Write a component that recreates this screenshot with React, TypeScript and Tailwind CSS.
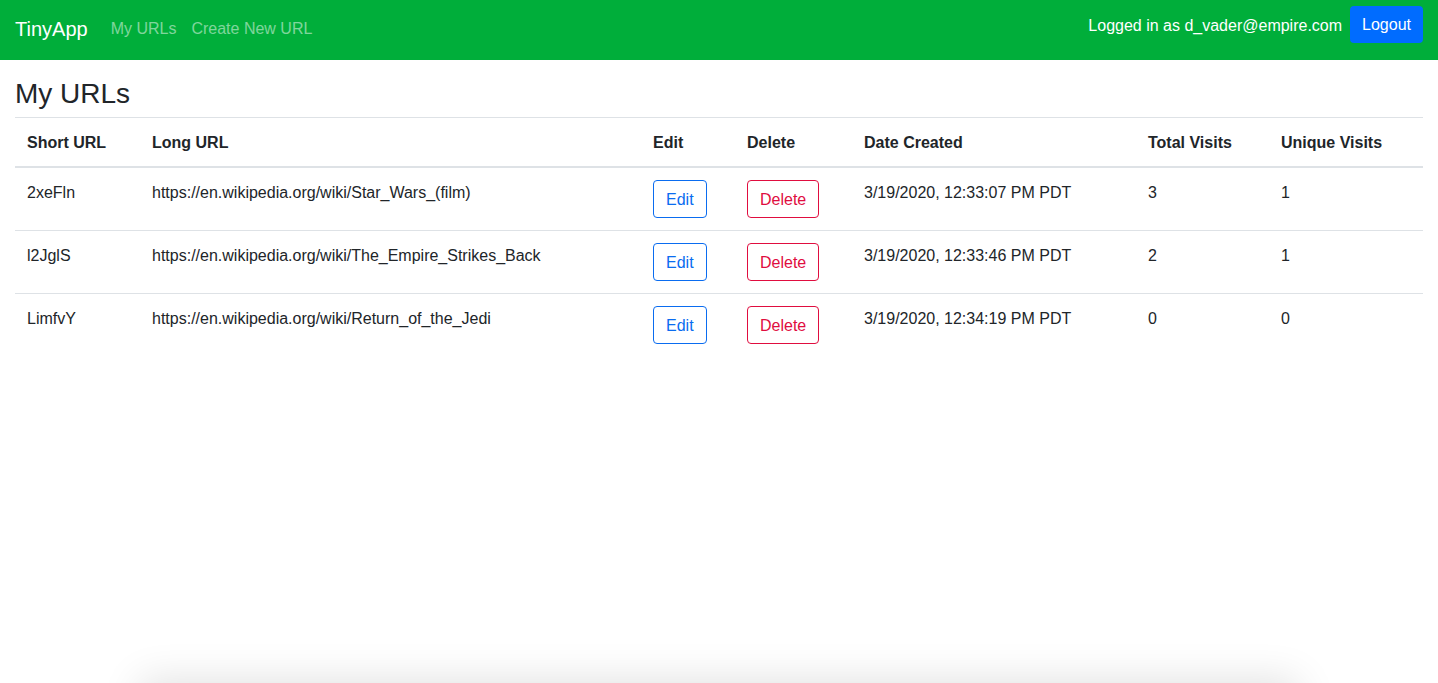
type UrlRow = {
  short: string;
  long: string;
  created: string;
  total: number;
  unique: number;
};

const rows: UrlRow[] = [
  { short: '2xeFln', long: 'https://en.wikipedia.org/wiki/Star_Wars_(film)', created: '3/19/2020, 12:33:07 PM PDT', total: 3, unique: 1 },
  { short: 'l2JglS', long: 'https://en.wikipedia.org/wiki/The_Empire_Strikes_Back', created: '3/19/2020, 12:33:46 PM PDT', total: 2, unique: 1 },
  { short: 'LimfvY', long: 'https://en.wikipedia.org/wiki/Return_of_the_Jedi', created: '3/19/2020, 12:34:19 PM PDT', total: 0, unique: 0 },
];

function Navbar() {
  return (
    <nav className="flex h-[60px] items-start justify-between bg-[#00ae3a] px-[15px]">
      <div className="flex items-center pt-[14px]">
        <a href="#" className="mr-[23px] text-[20px] leading-[30px] text-white">TinyApp</a>
        <a href="#" className="mr-[15px] text-base leading-[30px] text-white/50">My URLs</a>
        <a href="#" className="text-base leading-[30px] text-white/50">Create New URL</a>
      </div>
      <div className="flex items-center pt-[6px]">
        <span className="mt-[2px] mr-2 text-base text-white">Logged in as d_vader@empire.com</span>
        <button className="h-[37px] rounded-[4px] bg-[#006cff] px-3 pt-px text-base text-white">Logout</button>
      </div>
    </nav>
  );
}

function UrlTable() {
  const cell = 'px-3 pt-[13px] pb-[11px] align-top leading-6';
  return (
    <table className="w-full border-collapse text-left text-base text-[#212529]">
      <thead>
        <tr className="border-t border-b-2 border-t-[#dee2e6] border-b-[#dee2e6]">
          <th className={`w-[125px] font-bold ${cell}`}>Short URL</th>
          <th className={`w-[501px] font-bold ${cell}`}>Long URL</th>
          <th className={`w-[94px] font-bold ${cell}`}>Edit</th>
          <th className={`w-[117px] font-bold ${cell}`}>Delete</th>
          <th className={`w-[284px] font-bold ${cell}`}>Date Created</th>
          <th className={`w-[133px] font-bold ${cell}`}>Total Visits</th>
          <th className={`font-bold ${cell}`}>Unique Visits</th>
        </tr>
      </thead>
      <tbody>
        {rows.map((r, i) => (
          <tr key={r.short} className={i > 0 ? 'border-t border-[#dee2e6]' : ''}>
            <td className={cell}>{r.short}</td>
            <td className={cell}>{r.long}</td>
            <td className="p-3 align-top">
              <button className="h-[38px] rounded-[4px] border border-[#0a6cf0] px-3 pt-px text-[#0a6cf0]">Edit</button>
            </td>
            <td className="p-3 align-top">
              <button className="h-[38px] rounded-[4px] border border-[#e00d3f] px-3 pt-px text-[#e00d3f]">Delete</button>
            </td>
            <td className={cell}>{r.created}</td>
            <td className={cell}>{r.total}</td>
            <td className={cell}>{r.unique}</td>
          </tr>
        ))}
      </tbody>
    </table>
  );
}

export default function App() {
  return (
    <div className="relative min-h-[683px] overflow-hidden bg-white font-['Liberation_Sans',Arial,sans-serif]">
      <Navbar />
      <main className="px-[15px] pt-[17px]">
        <h3 className="mb-[6px] text-[28px] leading-[34px] font-medium text-[#212529]">My URLs</h3>
        <UrlTable />
      </main>
      {/* shadow of a panel sitting just below the fold */}
      <div className="pointer-events-none absolute top-[690px] right-[150px] left-[150px] h-10 shadow-[0_0_40px_10px_rgba(0,0,0,0.12)]" />
    </div>
  );
}
